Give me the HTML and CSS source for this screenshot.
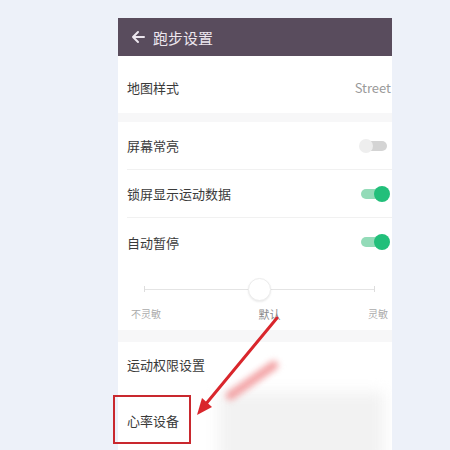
FILE: index.html
```html
<!DOCTYPE html>
<html lang="zh-CN">
<head>
    <meta charset="UTF-8">
    <meta name="viewport" content="width=device-width, initial-scale=1.0">
    <title>跑步设置</title>
    <link rel="stylesheet" href="styles.css">
</head>
<body>
    <div class="page">
        <div class="screen">
            <!-- Top bar -->
            <header class="top_bar">
                <svg class="back_icon" width="14" height="14" viewBox="0 0 14 14">
                    <path d="M13 7H2M7 2L2 7l5 5" fill="none" stroke="#ece6ee" stroke-width="2" stroke-linecap="round" stroke-linejoin="round"/>
                </svg>
                <span class="top_title">跑步设置</span>
            </header>

            <!-- Map style -->
            <section class="group">
                <div class="row row_map">
                    <span class="row_label">地图样式</span>
                    <span class="row_value">Street</span>
                </div>
            </section>

            <div class="gap gap_first"></div>

            <!-- Switches -->
            <section class="group">
                <div class="row row_line">
                    <span class="row_label">屏幕常亮</span>
                    <span class="switch"><span class="knob"></span></span>
                </div>
                <div class="row row_line">
                    <span class="row_label">锁屏显示运动数据</span>
                    <span class="switch on"><span class="knob"></span></span>
                </div>
                <div class="row">
                    <span class="row_label">自动暂停</span>
                    <span class="switch on"><span class="knob"></span></span>
                </div>

                <div class="slider_box">
                    <div class="slider">
                        <span class="tick"></span>
                        <span class="track"></span>
                        <span class="tick"></span>
                        <span class="thumb"></span>
                    </div>
                    <div class="slider_labels">
                        <span>不灵敏</span>
                        <span class="mid">默认</span>
                        <span>灵敏</span>
                    </div>
                </div>
            </section>

            <div class="gap gap_second"></div>

            <!-- Other settings -->
            <section class="group">
                <div class="row row_perm">
                    <span class="row_label">运动权限设置</span>
                </div>
                <div class="row row_heart">
                    <span class="row_label">心率设备</span>
                    <div class="smudge"></div>
                    <div class="smudge_red"></div>
                </div>
            </section>
        </div>

        <!-- Annotation -->
        <div class="mark_box"></div>
        <svg class="mark_arrow" width="450" height="450" viewBox="0 0 450 450">
            <line x1="277" y1="318" x2="205" y2="405" stroke="#d9262c" stroke-width="3" stroke-linecap="round"/>
            <polygon points="197,415 212,407 202,398" fill="#d9262c"/>
        </svg>
    </div>
</body>
</html>
```

FILE: styles.css
```css
body {
    margin: 0;
    padding: 0;
    background-color: #edf1f9;
    font-family: "Noto Sans CJK SC", "Noto Sans", sans-serif;
}

.page {
    position: relative;
    width: 450px;
    height: 450px;
    overflow: hidden;
    padding-top: 18px;
    box-sizing: border-box;
}

.screen {
    margin-left: 118px;
    width: 274px;
    background-color: #ffffff;
    overflow: hidden;
}

.top_bar {
    display: flex;
    align-items: center;
    height: 38px;
    padding-left: 13px;
    background-color: #594c5d;
}

.back_icon {
    margin-right: 8px;
}

.top_title {
    color: #ece6ee;
    font-size: 15px;
}

.group {
    background-color: #ffffff;
}

.gap {
    background-color: #f7f7f8;
}

.gap_first {
    height: 9px;
}

.gap_second {
    height: 12px;
}

.row {
    display: flex;
    align-items: center;
    justify-content: space-between;
    height: 48px;
    margin-left: 9px;
    padding-right: 3px;
    position: relative;
}

.row_line {
    border-bottom: 1px solid #f1f1f1;
    height: 47px;
}

.row_map {
    height: 57px;
    padding-top: 6px;
    box-sizing: border-box;
    padding-right: 1px;
}

.row_label {
    color: #3a3a3a;
    font-size: 13px;
}

.row_value {
    color: #9a9a9a;
    font-size: 13px;
}

.switch {
    position: relative;
    width: 26px;
    height: 10px;
    border-radius: 5px;
    background-color: #d4d4d4;
    margin-right: 2px;
}

.switch .knob {
    position: absolute;
    left: -2px;
    top: -2px;
    width: 14px;
    height: 14px;
    border-radius: 50%;
    background-color: #eeeeee;
}

.switch.on {
    background-color: #93dbb8;
}

.switch.on .knob {
    left: auto;
    right: -3px;
    top: -3px;
    width: 16px;
    height: 16px;
    background-color: #22bf7a;
}

.slider_box {
    height: 64px;
    padding: 0 4px 0 13px;
}

.slider {
    position: relative;
    display: flex;
    align-items: center;
    height: 10px;
    padding-top: 18px;
    margin: 0 13px 0 13px;
}

.slider .track {
    flex: 1;
    height: 1px;
    background-color: #e4e4e4;
}

.slider .tick {
    width: 1px;
    height: 6px;
    background-color: #dddddd;
}

.slider .thumb {
    position: absolute;
    left: 104px;
    top: 12px;
    width: 21px;
    height: 21px;
    border-radius: 50%;
    background-color: #ffffff;
    border: 1px solid #ececec;
    box-shadow: 0 1px 2px rgba(0, 0, 0, 0.08);
}

.slider_labels {
    display: flex;
    justify-content: space-between;
    margin-top: 12px;
    font-size: 10px;
    color: #aaaaaa;
}

.slider_labels .mid {
    font-size: 11px;
    color: #888888;
    margin-left: 10px;
}

.row_perm {
    height: 44px;
}

.row_heart {
    height: 68px;
}

.smudge {
    position: absolute;
    left: 92px;
    top: 6px;
    width: 165px;
    height: 70px;
    background-color: #f2f2f2;
    filter: blur(7px);
}

.smudge_red {
    position: absolute;
    left: 94px;
    top: -10px;
    width: 62px;
    height: 9px;
    border-radius: 5px;
    background-color: #f3a3a5;
    transform: rotate(-35deg);
    filter: blur(3px);
}

.mark_box {
    position: absolute;
    left: 113px;
    top: 395px;
    width: 74px;
    height: 45px;
    border: 2px solid #c9282e;
}

.mark_arrow {
    position: absolute;
    left: 0;
    top: 0;
}
```
